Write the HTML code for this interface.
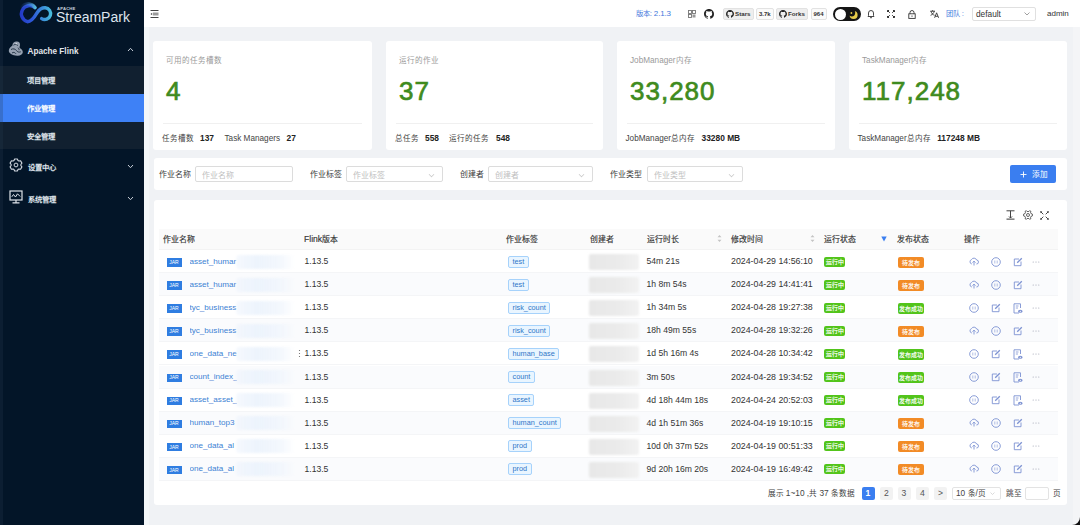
<!DOCTYPE html>
<html lang="zh-CN"><head><meta charset="utf-8">
<style>
*{box-sizing:border-box;margin:0;padding:0}
html,body{width:1080px;height:525px;overflow:hidden;background:#f0f2f5;font-family:"Liberation Sans",sans-serif;color:#333}
.abs{position:absolute}
.z{font-size:0.92em}
#side{position:absolute;left:0;top:0;width:144px;height:525px;background:#031528}
.mtxt{position:absolute;color:#dfe3ea;font-size:9px;line-height:10px;white-space:nowrap}
#hdr{position:absolute;left:144px;top:0;width:936px;height:27px;background:#fff}
.card{position:absolute;background:#fff;border-radius:3px}
.ct{position:absolute;font-size:8.2px;line-height:10px;color:#9a9a9a;white-space:nowrap}
.num{position:absolute;font-size:26px;line-height:26px;letter-spacing:1px;font-weight:normal;-webkit-text-stroke:0.7px #3f8b1e;color:#3f8b1e;white-space:nowrap}
.div{position:absolute;height:1px;background:#f0f0f0}
.ft{position:absolute;font-size:8.2px;line-height:10px;color:#444;white-space:nowrap}
.ft b{color:#222;font-size:8.4px;margin-left:6.5px;margin-right:10.5px}
.lbl{position:absolute;font-size:8.6px;line-height:10px;color:#3a3a3a;font-weight:normal;white-space:nowrap}
.inp{position:absolute;height:16px;border:1px solid #dcdcdc;border-radius:2px;background:#fff}
.ph{position:absolute;left:6px;top:3px;font-size:8.6px;line-height:10px;color:#c0c0c0;white-space:nowrap}
.chev{position:absolute;right:8px;top:5px;width:5px;height:5px;border-right:1px solid #c8c8c8;border-bottom:1px solid #c8c8c8;transform:rotate(45deg) scale(.8)}
.th{position:absolute;top:234px;font-size:8.6px;line-height:10px;font-weight:normal;-webkit-text-stroke:0.15px #333;color:#333;white-space:nowrap}
.row{position:absolute;left:159px;width:899px;height:23px}
.cell{position:absolute;font-size:8.6px;line-height:10px;color:#333;white-space:nowrap}
.jar{position:absolute;left:7.5px;top:8px;width:15px;height:8.5px;background:#2f7de1;color:#fff;font-size:5px;display:flex;align-items:center;justify-content:center;line-height:1}
.nm{position:absolute;left:30.5px;top:6.5px;font-size:8.1px;line-height:10px;color:#3d82d4;white-space:nowrap}
.blur{position:absolute;border-radius:3px;filter:blur(1px);background:linear-gradient(90deg,rgba(236,243,252,0.5),rgba(234,242,252,0.85) 35%,rgba(238,244,252,0.7) 75%,rgba(255,255,255,0))}
.tag{position:absolute;top:5.5px;height:12px;border:1px solid #a6d2fb;background:#e9f5ff;border-radius:2px;color:#2f76c8;font-size:7.3px;line-height:10px;padding:0 3.5px;white-space:nowrap}
.cr{position:absolute;left:430px;top:4px;width:50px;height:16px;border-radius:2px;filter:blur(1px);background:linear-gradient(90deg,#e8e8e8,#ebebeb 60%,#f2f2f2)}
.run{position:absolute;left:665px;top:6.5px;width:21px;height:10px;background:#52c41a;border-radius:2px;color:#fff;font-size:6.4px;line-height:10px;text-align:center;font-weight:normal;-webkit-text-stroke:0.15px #fff}
.pub{position:absolute;left:738.5px;top:6.5px;width:26px;height:11px;border-radius:2px;color:#fff;font-size:6.4px;line-height:11px;text-align:center;font-weight:normal;-webkit-text-stroke:0.15px #fff}
.ic{position:absolute;top:6.5px}
.pg{position:absolute;top:486.5px;width:13px;height:13px;border-radius:2px;font-size:8.6px;line-height:13px;text-align:center;color:#555}
</style></head><body>

<div id="side">
  <svg class="abs" style="left:12px;top:0px" width="48" height="28" viewBox="12 0 48 28">
    <defs>
      <linearGradient id="lg1" x1="17" y1="0" x2="52" y2="0" gradientUnits="userSpaceOnUse">
        <stop offset="0" stop-color="#2030c0"/><stop offset="0.45" stop-color="#2e5ad8"/><stop offset="1" stop-color="#48c0dc"/>
      </linearGradient>
      <linearGradient id="lg2" x1="20" y1="5" x2="36" y2="9" gradientUnits="userSpaceOnUse">
        <stop offset="0" stop-color="#2a4fd0" stop-opacity="0"/><stop offset="1" stop-color="#5cc6d8"/>
      </linearGradient>
    </defs>
    <path d="M35 7.6 A8.2 8.2 0 1 0 27.5 21.7 C31.5 21.7 34.2 17.5 37 12.8 C39.3 9 41.8 7.6 45.2 7.7 A5.9 5.9 0 1 1 41.6 18.6" fill="none" stroke="url(#lg1)" stroke-width="3.4" stroke-linecap="round"/>
    <path d="M22 6.7 A8.2 8.2 0 0 1 35 7.6" fill="none" stroke="url(#lg2)" stroke-width="3.2" stroke-linecap="round"/>
  </svg>
  <div class="abs" style="left:57px;top:5.5px;font-size:4.2px;line-height:5px;font-weight:bold;color:#c9d2de;letter-spacing:0.2px">APACHE</div>
  <div class="abs" style="left:56px;top:10px;font-size:14px;line-height:14px;color:#dde4ee;font-weight:normal">StreamPark</div>

  <!-- Apache Flink -->
  <svg class="abs" style="left:8px;top:41px" width="16" height="16" viewBox="0 0 16 16">
    <path d="M8.5 0.6 C11 0.4 12.3 2.2 12 4.3 C11.8 5.6 11.2 6.3 11.8 7 C13.8 8.2 15 9.8 14.8 11.6 C14.5 13.8 12.2 14.8 9.5 14.7 C6.5 14.6 3 14 1.5 11.8 C0.3 10 0.8 7.6 2.4 6.2 C3.6 5.1 4.6 5 4.5 3.8 C4.6 2 6.3 0.8 8.5 0.6 Z" fill="#96a1b1"/>
    <path d="M5.5 4.2 C6.8 3 9 3.3 9.8 4.6 M3 8.5 C5 7.2 7.5 8 8.5 9.6 C9.3 11 11 11.5 12.8 10.8 M4 12 C5.5 10.8 7 11.5 8 12.8 M9.8 6.8 C10.8 7.2 11.3 8.2 11 9.2" fill="none" stroke="#1a2a3c" stroke-width="0.9"/>
    <circle cx="8.2" cy="2.7" r="0.7" fill="#e6eaf0"/>
  </svg>
  <div class="mtxt" style="left:27.5px;top:46.5px;font-weight:bold;font-size:8.2px;color:#e2e6ec">Apache Flink</div>
  <svg class="abs" style="left:126.5px;top:47px" width="7" height="5" viewBox="0 0 7 5"><path d="M1 4 L3.5 1.3 L6 4" fill="none" stroke="#c8cfd8" stroke-width="1"/></svg>

  <div class="abs" style="left:0;top:65.5px;width:144px;height:83.5px;background:#112030"></div>
  <div class="abs" style="left:0;top:93.5px;width:144px;height:28px;background:#3e81f6"></div>
  <div class="mtxt" style="left:26.8px;top:75.5px;font-size:8px;font-weight:bold;color:#dfe4eb"><span class="z">项目管理</span></div>
  <div class="mtxt" style="left:26.8px;top:103.5px;font-size:8px;font-weight:bold;color:#fff"><span class="z">作业管理</span></div>
  <div class="mtxt" style="left:26.8px;top:131.5px;font-size:8px;font-weight:bold;color:#dfe4eb"><span class="z">安全管理</span></div>

  <!-- settings -->
  <svg class="abs" style="left:8.8px;top:157.8px" width="14" height="14" viewBox="0 0 14 14">
    <path d="M5.00 2.53 L5.65 0.95 L8.35 0.95 L9.00 2.53 L9.88 3.03 L11.56 2.80 L12.92 5.15 L11.87 6.49 L11.87 7.51 L12.92 8.85 L11.56 11.20 L9.88 10.97 L9.00 11.47 L8.35 13.05 L5.65 13.05 L5.00 11.47 L4.12 10.97 L2.44 11.20 L1.08 8.85 L2.13 7.51 L2.13 6.49 L1.08 5.15 L2.44 2.80 L4.12 3.03 Z" fill="none" stroke="#d2d8e0" stroke-width="1.1" stroke-linejoin="round"/>
    <circle cx="7" cy="7" r="1.9" fill="none" stroke="#d2d8e0" stroke-width="1"/>
  </svg>
  <div class="mtxt" style="left:27.5px;top:162.5px;font-size:8px;font-weight:bold;color:#dfe4eb"><span class="z">设置中心</span></div>
  <svg class="abs" style="left:126.5px;top:163.5px" width="7" height="5" viewBox="0 0 7 5"><path d="M1 1 L3.5 3.7 L6 1" fill="none" stroke="#c8cfd8" stroke-width="1"/></svg>

  <!-- system -->
  <svg class="abs" style="left:9px;top:189.5px" width="14" height="14" viewBox="0 0 14 14">
    <rect x="1" y="1" width="12" height="9" fill="none" stroke="#dfe4ea" stroke-width="1.2"/>
    <path d="M2.8 6.8 L4.5 4.5 L6.5 7 L8.5 3.8 L11.2 6.5" fill="none" stroke="#dfe4ea" stroke-width="1"/>
    <path d="M7 10 L7 12.5 M3.5 12.8 L10.5 12.8" fill="none" stroke="#dfe4ea" stroke-width="1.2"/>
  </svg>
  <div class="mtxt" style="left:27.5px;top:195px;font-size:8px;font-weight:bold;color:#dfe4eb"><span class="z">系统管理</span></div>
  <svg class="abs" style="left:126.5px;top:195.5px" width="7" height="5" viewBox="0 0 7 5"><path d="M1 1 L3.5 3.7 L6 1" fill="none" stroke="#c8cfd8" stroke-width="1"/></svg>
</div>
<div class="abs" style="left:144px;top:27px;width:5px;height:498px;background:#f4f7f9"></div>

<div id="hdr">
  <!-- collapse icon -->
  <svg class="abs" style="left:6px;top:9px" width="10" height="10" viewBox="0 0 10 10">
    <rect x="0.5" y="1" width="8" height="1" fill="#444"/>
    <rect x="0.5" y="8" width="8" height="1" fill="#444"/>
    <rect x="3" y="3.5" width="5.5" height="3" fill="#9a9a9a"/>
    <path d="M0.5 5 L2.2 3.8 L2.2 6.2 Z" fill="#444"/>
  </svg>
  <div class="abs" style="left:492px;top:8.5px;font-size:8px;line-height:10px;color:#3f78dc;white-space:nowrap;letter-spacing:-0.15px"><span class="z">版本</span>: 2.1.3</div>
  <!-- qr -->
  <svg class="abs" style="left:544px;top:10px" width="8" height="8" viewBox="0 0 8 8">
    <rect x="0.5" y="0.5" width="3" height="3" fill="none" stroke="#777" stroke-width="0.9"/>
    <rect x="4.5" y="0.5" width="3" height="3" fill="none" stroke="#777" stroke-width="0.9"/>
    <rect x="0.5" y="4.5" width="3" height="3" fill="none" stroke="#777" stroke-width="0.9"/>
    <rect x="4.5" y="4.5" width="3" height="3" fill="#999"/>
  </svg>
  <!-- github -->
  <svg class="abs" style="left:560px;top:9px" width="10" height="10" viewBox="0 0 16 16"><path fill="#222" d="M8 0C3.58 0 0 3.58 0 8c0 3.54 2.29 6.53 5.47 7.59.4.07.55-.17.55-.38 0-.19-.01-.82-.01-1.49-2.01.37-2.53-.49-2.69-.94-.09-.23-.48-.94-.82-1.13-.28-.15-.68-.52-.01-.53.63-.01 1.08.58 1.23.82.72 1.21 1.87.87 2.33.66.07-.52.28-.87.51-1.07-1.78-.2-3.640-.89-3.64-3.95 0-.87.31-1.59.82-2.15-.08-.2-.36-1.02.08-2.12 0 0 .67-.21 2.2.82.64-.18 1.32-.27 2-.27.68 0 1.36.09 2 .27 1.530-1.04 2.2-.82 2.2-.82.44 1.1.16 1.92.08 2.12.51.56.82 1.27.82 2.15 0 3.07-1.87 3.75-3.65 3.95.29.25.54.73.54 1.48 0 1.07-.01 1.93-.01 2.2 0 .21.15.46.55.38A8.013 8.013 0 0016 8c0-4.42-3.58-8-8-8z"/></svg>
  <!-- stars -->
  <div class="abs" style="left:579px;top:8px;width:30.5px;height:12px;background:#eeeeee;border:1px solid #e2e2e2;border-radius:2px"></div>
  <svg class="abs" style="left:582px;top:10px" width="8" height="8" viewBox="0 0 16 16"><path fill="#222" d="M8 0C3.58 0 0 3.58 0 8c0 3.54 2.29 6.53 5.470 7.59.4.07.55-.17.55-.38 0-.19-.01-.82-.01-1.49-2.010.37-2.53-.49-2.69-.94-.09-.23-.48-.94-.82-1.13-.28-.15-.68-.52-.01-.53.63-.01 1.08.58 1.23.82.72 1.21 1.87.87 2.33.66.07-.52.28-.87.51-1.07-1.78-.2-3.64-.89-3.64-3.95 0-.87.31-1.59.82-2.15-.08-.2-.36-1.02.08-2.12 0 0 .67-.21 2.2.82.64-.18 1.32-.27 2-.27.68 0 1.36.09 2 .27 1.53-1.04 2.2-.82 2.2-.82.44 1.1.16 1.92.08 2.12.51.56.82 1.27.82 2.15 0 3.07-1.87 3.75-3.65 3.95.29.25.54.73.54 1.48 0 1.07-.01 1.93-.01 2.2 0 .21.15.46.55.38A8.013 8.013 0 0016 8c0-4.42-3.58-8-8-8z"/></svg>
  <div class="abs" style="left:591px;top:9px;font-size:6.2px;line-height:9px;font-weight:bold;color:#333">Stars</div>
  <div class="abs" style="left:612px;top:8px;width:17.5px;height:12px;background:#fafafa;border:1px solid #e2e2e2;border-radius:2px;font-size:6px;line-height:10px;font-weight:bold;color:#333;text-align:center">3.7k</div>
  <div class="abs" style="left:632px;top:8px;width:31.5px;height:12px;background:#eeeeee;border:1px solid #e2e2e2;border-radius:2px"></div>
  <svg class="abs" style="left:635px;top:10px" width="8" height="8" viewBox="0 0 16 16"><path fill="#222" d="M8 0C3.58 0 0 3.58 0 8c0 3.54 2.29 6.53 5.47 7.59.4.07.55-.17.55-.38 0-.19-.01-.82-.01-1.49-2.01.37-2.53-.49-2.69-.94-.09-.23-.48-.94-.82-1.13-.28-.15-.68-.52-.01-.53.63-.01 1.08.58 1.23.82.72 1.21 1.87.87 2.33.66.07-.52.28-.87.51-1.07-1.78-.2-3.64-.89-3.64-3.95 0-.87.31-1.59.82-2.15-.08-.2-.36-1.02.08-2.12 0 0 .67-.21 2.2.82.64-.18 1.32-.27 2-.27.68 0 1.36.09 2 .27 1.53-1.04 2.2-.82 2.2-.82.44 1.1.16 1.92.08 2.12.51.56.82 1.27.82 2.15 0 3.07-1.87 3.75-3.65 3.95.29.25.54.73.54 1.48 0 1.07-.01 1.93-.01 2.2 0 .21.15.46.55.38A8.013 8.013 0 0016 8c0-4.42-3.58-8-8-8z"/></svg>
  <div class="abs" style="left:644px;top:9px;font-size:6.2px;line-height:9px;font-weight:bold;color:#333">Forks</div>
  <div class="abs" style="left:666.5px;top:8px;width:16px;height:12px;background:#fafafa;border:1px solid #e2e2e2;border-radius:2px;font-size:6px;line-height:10px;font-weight:bold;color:#333;text-align:center">964</div>
  <!-- dark toggle -->
  <div class="abs" style="left:689px;top:7px;width:27.5px;height:14px;background:#151515;border-radius:7px"></div>
  <div class="abs" style="left:690.5px;top:8.5px;width:11px;height:11px;background:#fff;border-radius:50%"></div>
  <svg class="abs" style="left:704px;top:8.5px" width="11" height="11" viewBox="0 0 11 11"><defs><mask id="mm"><rect width="11" height="11" fill="#fff"/><circle cx="3.6" cy="3.8" r="3.6" fill="#000"/></mask></defs><circle cx="5.6" cy="5.9" r="4" fill="#e8cc4a" mask="url(#mm)"/><circle cx="3.4" cy="4" r="0.9" fill="#e8cc4a"/></svg>
  <!-- bell -->
  <svg class="abs" style="left:723px;top:9px" width="8" height="10" viewBox="0 0 8 10"><path d="M1 7.5 L1.5 6.5 L1.5 4 A2.5 2.5 0 0 1 6.5 4 L6.5 6.5 L7 7.5 Z" fill="none" stroke="#333" stroke-width="0.9"/><path d="M3 8.7 L5 8.7" stroke="#333" stroke-width="0.9"/></svg>
  <!-- fullscreen -->
  <svg class="abs" style="left:743px;top:10px" width="8" height="8" viewBox="0 0 8 8"><path d="M0.5 0.5 L2.8 2.8 M0.5 0.5 L0.5 2 M0.5 0.5 L2 0.5 M7.5 0.5 L5.2 2.8 M7.5 0.5 L6 0.5 M7.5 0.5 L7.5 2 M0.5 7.5 L2.8 5.2 M0.5 7.5 L0.5 6 M0.5 7.5 L2 7.5 M7.5 7.5 L5.2 5.2 M7.5 7.5 L7.5 6 M7.5 7.5 L6 7.5" stroke="#333" stroke-width="1"/></svg>
  <!-- lock -->
  <svg class="abs" style="left:764px;top:9.5px" width="8" height="9" viewBox="0 0 8 9"><rect x="0.8" y="3.8" width="6.4" height="4.6" fill="none" stroke="#333" stroke-width="0.9"/><path d="M2 3.8 L2 2.5 A2 2 0 0 1 6 2.5 L6 3.8" fill="none" stroke="#333" stroke-width="0.9"/><path d="M4 5.5 L4 6.8" stroke="#333" stroke-width="0.9"/></svg>
  <!-- translate -->
  <svg class="abs" style="left:786px;top:10px" width="9" height="8" viewBox="0 0 9 8"><path d="M0.3 1.2 L5 1.2 M2.6 0.2 L2.6 1.2 M1 1.2 C1.5 3.5 3 4.8 4.6 5.3 M4.2 1.2 C3.8 3.2 2.5 4.6 0.6 5.3" fill="none" stroke="#333" stroke-width="0.9"/><path d="M4.6 7.8 L6.6 2.8 L8.6 7.8 M5.3 6.3 L7.9 6.3" fill="none" stroke="#333" stroke-width="0.9"/></svg>
  <div class="abs" style="left:801.5px;top:9px;font-size:7.8px;line-height:10px;color:#4a80e0;white-space:nowrap"><span class="z">团队</span> :</div>
  <div class="abs" style="left:827.5px;top:7px;width:64px;height:13.5px;border:1px solid #e0e0e0;border-radius:2px;background:#fff"></div>
  <div class="abs" style="left:832px;top:9px;font-size:8.3px;line-height:10px;color:#333">default</div>
  <svg class="abs" style="left:879.5px;top:12px" width="6" height="4" viewBox="0 0 6 4"><path d="M0.5 0.5 L3 3 L5.5 0.5" fill="none" stroke="#888" stroke-width="0.8"/></svg>
  <div class="abs" style="left:903px;top:8.5px;font-size:8px;line-height:10px;color:#333">admin</div>
</div>

<!-- stat cards -->
<div class="card" style="left:153px;top:41px;width:219px;height:109px">
  <div class="ct" style="left:13px;top:14.5px"><span class="z">可用的任务槽数</span></div>
  <div class="num" style="left:13px;top:37px">4</div>
  <div class="div" style="left:10px;top:82px;width:199px"></div>
  <div class="ft" style="left:8.5px;top:91.5px"><span class="z">任务槽数</span><b>137</b>Task Managers<b>27</b></div>
</div>
<div class="card" style="left:386px;top:41px;width:217px;height:109px">
  <div class="ct" style="left:13px;top:14.5px"><span class="z">运行的作业</span></div>
  <div class="num" style="left:13px;top:37px">37</div>
  <div class="div" style="left:10px;top:82px;width:197px"></div>
  <div class="ft" style="left:8.5px;top:91.5px"><span class="z">总任务</span><b>558</b><span class="z">运行的任务</span><b>548</b></div>
</div>
<div class="card" style="left:617px;top:41px;width:218px;height:109px">
  <div class="ct" style="left:13px;top:14.5px">JobManager<span class="z">内存</span></div>
  <div class="num" style="left:13px;top:37px">33,280</div>
  <div class="div" style="left:10px;top:82px;width:198px"></div>
  <div class="ft" style="left:8.5px;top:91.5px">JobManager<span class="z">总内存</span><b>33280 MB</b></div>
</div>
<div class="card" style="left:849px;top:41px;width:218px;height:109px">
  <div class="ct" style="left:13px;top:14.5px">TaskManager<span class="z">内存</span></div>
  <div class="num" style="left:13px;top:37px">117,248</div>
  <div class="div" style="left:10px;top:82px;width:198px"></div>
  <div class="ft" style="left:8.5px;top:91.5px">TaskManager<span class="z">总内存</span><b>117248 MB</b></div>
</div>

<!-- search -->
<div class="card" style="left:153.5px;top:158px;width:913px;height:32px">
  <div class="lbl" style="left:5.5px;top:11px"><span class="z">作业名称</span></div>
  <div class="inp" style="left:41.5px;top:8px;width:97.5px"><div class="ph"><span class="z">作业名称</span></div></div>
  <div class="lbl" style="left:156px;top:11px"><span class="z">作业标签</span></div>
  <div class="inp" style="left:192px;top:8px;width:97px"><div class="ph"><span class="z">作业标签</span></div><div class="chev"></div></div>
  <div class="lbl" style="left:306px;top:11px"><span class="z">创建者</span></div>
  <div class="inp" style="left:334.5px;top:8px;width:104.5px"><div class="ph"><span class="z">创建者</span></div><div class="chev"></div></div>
  <div class="lbl" style="left:456px;top:11px"><span class="z">作业类型</span></div>
  <div class="inp" style="left:493px;top:8px;width:96.5px"><div class="ph"><span class="z">作业类型</span></div><div class="chev"></div></div>
  <div class="abs" style="left:856.5px;top:7px;width:46px;height:17.5px;background:#3a7ef0;border-radius:2px"></div>
  <svg class="abs" style="left:866.5px;top:12.5px" width="7" height="7" viewBox="0 0 7 7"><path d="M3.5 0.5 L3.5 6.5 M0.5 3.5 L6.5 3.5" stroke="#fff" stroke-width="0.9"/></svg>
  <div class="abs" style="left:878.5px;top:10.5px;font-size:8.3px;line-height:10px;color:#fff;white-space:nowrap"><span class="z">添加</span></div>
</div>

<!-- table card -->
<div class="card" style="left:153.5px;top:200px;width:913px;height:305px"></div>
<!-- table -->
<div class="abs" style="left:159px;top:228.5px;width:899px;height:21.5px;background:#fafafa;border-bottom:1px solid #f3f3f3"></div>
<div class="th" style="left:163.3px"><span class="z">作业名称</span></div>
<div class="th" style="left:304px">Flink<span class="z">版本</span></div>
<div class="th" style="left:505.6px"><span class="z">作业标签</span></div>
<div class="th" style="left:589.7px"><span class="z">创建者</span></div>
<div class="th" style="left:646.5px"><span class="z">运行时长</span></div>
<div class="th" style="left:730.6px"><span class="z">修改时间</span></div>
<div class="th" style="left:823.8px"><span class="z">运行状态</span></div>
<div class="th" style="left:896.6px"><span class="z">发布状态</span></div>
<div class="th" style="left:964px"><span class="z">操作</span></div>
<svg class="abs" style="left:716.5px;top:234px" width="5" height="9" viewBox="0 0 5 9"><path d="M0.5 3.3 L2.5 1 L4.5 3.3 Z M0.5 5.7 L2.5 8 L4.5 5.7 Z" fill="#c4c4c4"/></svg>
<svg class="abs" style="left:809.5px;top:234px" width="5" height="9" viewBox="0 0 5 9"><path d="M0.5 3.3 L2.5 1 L4.5 3.3 Z M0.5 5.7 L2.5 8 L4.5 5.7 Z" fill="#c4c4c4"/></svg>
<svg class="abs" style="left:880.5px;top:235.5px" width="6" height="6" viewBox="0 0 6 6"><path d="M0.3 0.5 L5.7 0.5 L3 5.5 Z" fill="#3b7ff0"/></svg>
<div class="row" style="top:250.0px;background:#fff;border-bottom:1px solid #f4f5f7">
  <div class="jar">JAR</div>
  <div class="nm" style="width:47px;overflow:hidden">asset_humar</div>
  <div class="blur" style="left:77px;top:4.5px;width:59px;height:14px"></div>
  <div class="cell" style="left:145.5px;top:6px">1.13.5</div>
  <div class="tag" style="left:349px">test</div>
  <div class="cr"></div>
  <div class="cell" style="left:487.5px;top:6px">54m 21s</div>
  <div class="cell" style="left:572px;top:6px;font-size:8.8px">2024-04-29 14:56:10</div>
  <div class="run"><span class="z">运行中</span></div>
  <div class="pub" style="background:#f28b26"><span class="z">待发布</span></div>
  <div class="ic" style="left:809.5px;top:6.5px;line-height:0"><svg width="10" height="9" viewBox="0 0 10 9"><path d="M2.8 7 A2.3 2.3 0 0 1 2.5 2.6 A2.8 2.8 0 0 1 7.6 3 A2 2 0 0 1 7.4 7" fill="none" stroke="#7d92d2" stroke-width="0.9"/><path d="M5 8.5 L5 4.3 M3.5 5.6 L5 4.1 L6.5 5.6" fill="none" stroke="#7d92d2" stroke-width="0.9"/></svg></div>
  <div class="ic" style="left:831.5px;top:6.5px;line-height:0"><svg width="10" height="10" viewBox="0 0 10 10"><circle cx="5" cy="5" r="4.3" fill="none" stroke="#7d92d2" stroke-width="0.9"/><path d="M3.8 3.5 L3.8 6.5 M6.2 3.5 L6.2 6.5" stroke="#7d92d2" stroke-width="0.6"/></svg></div>
  <div class="ic" style="left:853.5px;top:6.5px;line-height:0"><svg width="10" height="10" viewBox="0 0 10 10"><path d="M6 2 L1.3 2 L1.3 8.7 L8 8.7 L8 4.5" fill="none" stroke="#7d92d2" stroke-width="0.9"/><path d="M4.2 5.8 L8.8 1.2" stroke="#7d92d2" stroke-width="1.3"/></svg></div>
  <div class="ic" style="left:873px;top:8.5px;line-height:0"><svg width="8" height="4" viewBox="0 0 8 4"><circle cx="1.2" cy="2" r="0.55" fill="#9ca1b0"/><circle cx="4" cy="2" r="0.55" fill="#9ca1b0"/><circle cx="6.8" cy="2" r="0.55" fill="#9ca1b0"/></svg></div>
</div>
<div class="row" style="top:273.1px;background:#fafbfd;border-bottom:1px solid #f4f5f7">
  <div class="jar">JAR</div>
  <div class="nm" style="width:47px;overflow:hidden">asset_humar</div>
  <div class="blur" style="left:77px;top:4.5px;width:59px;height:14px"></div>
  <div class="cell" style="left:145.5px;top:6px">1.13.5</div>
  <div class="tag" style="left:349px">test</div>
  <div class="cr"></div>
  <div class="cell" style="left:487.5px;top:6px">1h 8m 54s</div>
  <div class="cell" style="left:572px;top:6px;font-size:8.8px">2024-04-29 14:41:41</div>
  <div class="run"><span class="z">运行中</span></div>
  <div class="pub" style="background:#f28b26"><span class="z">待发布</span></div>
  <div class="ic" style="left:809.5px;top:6.5px;line-height:0"><svg width="10" height="9" viewBox="0 0 10 9"><path d="M2.8 7 A2.3 2.3 0 0 1 2.5 2.6 A2.8 2.8 0 0 1 7.6 3 A2 2 0 0 1 7.4 7" fill="none" stroke="#7d92d2" stroke-width="0.9"/><path d="M5 8.5 L5 4.3 M3.5 5.6 L5 4.1 L6.5 5.6" fill="none" stroke="#7d92d2" stroke-width="0.9"/></svg></div>
  <div class="ic" style="left:831.5px;top:6.5px;line-height:0"><svg width="10" height="10" viewBox="0 0 10 10"><circle cx="5" cy="5" r="4.3" fill="none" stroke="#7d92d2" stroke-width="0.9"/><path d="M3.8 3.5 L3.8 6.5 M6.2 3.5 L6.2 6.5" stroke="#7d92d2" stroke-width="0.6"/></svg></div>
  <div class="ic" style="left:853.5px;top:6.5px;line-height:0"><svg width="10" height="10" viewBox="0 0 10 10"><path d="M6 2 L1.3 2 L1.3 8.7 L8 8.7 L8 4.5" fill="none" stroke="#7d92d2" stroke-width="0.9"/><path d="M4.2 5.8 L8.8 1.2" stroke="#7d92d2" stroke-width="1.3"/></svg></div>
  <div class="ic" style="left:873px;top:8.5px;line-height:0"><svg width="8" height="4" viewBox="0 0 8 4"><circle cx="1.2" cy="2" r="0.55" fill="#9ca1b0"/><circle cx="4" cy="2" r="0.55" fill="#9ca1b0"/><circle cx="6.8" cy="2" r="0.55" fill="#9ca1b0"/></svg></div>
</div>
<div class="row" style="top:296.2px;background:#fff;border-bottom:1px solid #f4f5f7">
  <div class="jar">JAR</div>
  <div class="nm" style="width:47px;overflow:hidden">tyc_business</div>
  <div class="blur" style="left:77px;top:4.5px;width:59px;height:14px"></div>
  <div class="cell" style="left:145.5px;top:6px">1.13.5</div>
  <div class="tag" style="left:349px">risk_count</div>
  <div class="cr"></div>
  <div class="cell" style="left:487.5px;top:6px">1h 34m 5s</div>
  <div class="cell" style="left:572px;top:6px;font-size:8.8px">2024-04-28 19:27:38</div>
  <div class="run"><span class="z">运行中</span></div>
  <div class="pub" style="background:#52c41a"><span class="z">发布成功</span></div>
  <div class="ic" style="left:809.5px;top:6.5px;line-height:0"><svg width="10" height="10" viewBox="0 0 10 10"><circle cx="5" cy="5" r="4.3" fill="none" stroke="#7d92d2" stroke-width="0.9"/><path d="M3.8 3.5 L3.8 6.5 M6.2 3.5 L6.2 6.5" stroke="#7d92d2" stroke-width="0.6"/></svg></div>
  <div class="ic" style="left:831.5px;top:6.5px;line-height:0"><svg width="10" height="10" viewBox="0 0 10 10"><path d="M6 2 L1.3 2 L1.3 8.7 L8 8.7 L8 4.5" fill="none" stroke="#7d92d2" stroke-width="0.9"/><path d="M4.2 5.8 L8.8 1.2" stroke="#7d92d2" stroke-width="1.3"/></svg></div>
  <div class="ic" style="left:853.5px;top:6.5px;line-height:0"><svg width="10" height="11" viewBox="0 0 10 11"><path d="M6 10 L1 10 L1 0.8 L7.5 0.8 L7.5 5" fill="none" stroke="#7d92d2" stroke-width="0.9"/><path d="M2.8 3 L5.5 3 M2.8 5 L5 5" stroke="#7d92d2" stroke-width="0.8"/><ellipse cx="7.3" cy="8.3" rx="2.3" ry="1.5" fill="#7d92d2"/><circle cx="7.3" cy="8.3" r="0.6" fill="#fff"/></svg></div>
  <div class="ic" style="left:873px;top:8.5px;line-height:0"><svg width="8" height="4" viewBox="0 0 8 4"><circle cx="1.2" cy="2" r="0.55" fill="#9ca1b0"/><circle cx="4" cy="2" r="0.55" fill="#9ca1b0"/><circle cx="6.8" cy="2" r="0.55" fill="#9ca1b0"/></svg></div>
</div>
<div class="row" style="top:319.3px;background:#fafbfd;border-bottom:1px solid #f4f5f7">
  <div class="jar">JAR</div>
  <div class="nm" style="width:47px;overflow:hidden">tyc_business</div>
  <div class="blur" style="left:77px;top:4.5px;width:59px;height:14px"></div>
  <div class="cell" style="left:145.5px;top:6px">1.13.5</div>
  <div class="tag" style="left:349px">risk_count</div>
  <div class="cr"></div>
  <div class="cell" style="left:487.5px;top:6px">18h 49m 55s</div>
  <div class="cell" style="left:572px;top:6px;font-size:8.8px">2024-04-28 19:32:26</div>
  <div class="run"><span class="z">运行中</span></div>
  <div class="pub" style="background:#f28b26"><span class="z">待发布</span></div>
  <div class="ic" style="left:809.5px;top:6.5px;line-height:0"><svg width="10" height="9" viewBox="0 0 10 9"><path d="M2.8 7 A2.3 2.3 0 0 1 2.5 2.6 A2.8 2.8 0 0 1 7.6 3 A2 2 0 0 1 7.4 7" fill="none" stroke="#7d92d2" stroke-width="0.9"/><path d="M5 8.5 L5 4.3 M3.5 5.6 L5 4.1 L6.5 5.6" fill="none" stroke="#7d92d2" stroke-width="0.9"/></svg></div>
  <div class="ic" style="left:831.5px;top:6.5px;line-height:0"><svg width="10" height="10" viewBox="0 0 10 10"><circle cx="5" cy="5" r="4.3" fill="none" stroke="#7d92d2" stroke-width="0.9"/><path d="M3.8 3.5 L3.8 6.5 M6.2 3.5 L6.2 6.5" stroke="#7d92d2" stroke-width="0.6"/></svg></div>
  <div class="ic" style="left:853.5px;top:6.5px;line-height:0"><svg width="10" height="10" viewBox="0 0 10 10"><path d="M6 2 L1.3 2 L1.3 8.7 L8 8.7 L8 4.5" fill="none" stroke="#7d92d2" stroke-width="0.9"/><path d="M4.2 5.8 L8.8 1.2" stroke="#7d92d2" stroke-width="1.3"/></svg></div>
  <div class="ic" style="left:873px;top:8.5px;line-height:0"><svg width="8" height="4" viewBox="0 0 8 4"><circle cx="1.2" cy="2" r="0.55" fill="#9ca1b0"/><circle cx="4" cy="2" r="0.55" fill="#9ca1b0"/><circle cx="6.8" cy="2" r="0.55" fill="#9ca1b0"/></svg></div>
</div>
<div class="row" style="top:342.4px;background:#fff;border-bottom:1px solid #f4f5f7">
  <div class="jar">JAR</div>
  <div class="nm" style="width:47px;overflow:hidden">one_data_ne</div>
  <div class="blur" style="left:77px;top:4.5px;width:59px;height:14px"></div>
  <div class="cell" style="left:145.5px;top:6px">1.13.5</div>
  <div class="tag" style="left:349px">human_base</div>
  <div class="cr"></div>
  <div class="cell" style="left:487.5px;top:6px">1d 5h 16m 4s</div>
  <div class="cell" style="left:572px;top:6px;font-size:8.8px">2024-04-28 10:34:42</div>
  <div class="run"><span class="z">运行中</span></div>
  <div class="pub" style="background:#52c41a"><span class="z">发布成功</span></div>
  <div class="ic" style="left:809.5px;top:6.5px;line-height:0"><svg width="10" height="10" viewBox="0 0 10 10"><circle cx="5" cy="5" r="4.3" fill="none" stroke="#7d92d2" stroke-width="0.9"/><path d="M3.8 3.5 L3.8 6.5 M6.2 3.5 L6.2 6.5" stroke="#7d92d2" stroke-width="0.6"/></svg></div>
  <div class="ic" style="left:831.5px;top:6.5px;line-height:0"><svg width="10" height="10" viewBox="0 0 10 10"><path d="M6 2 L1.3 2 L1.3 8.7 L8 8.7 L8 4.5" fill="none" stroke="#7d92d2" stroke-width="0.9"/><path d="M4.2 5.8 L8.8 1.2" stroke="#7d92d2" stroke-width="1.3"/></svg></div>
  <div class="ic" style="left:853.5px;top:6.5px;line-height:0"><svg width="10" height="11" viewBox="0 0 10 11"><path d="M6 10 L1 10 L1 0.8 L7.5 0.8 L7.5 5" fill="none" stroke="#7d92d2" stroke-width="0.9"/><path d="M2.8 3 L5.5 3 M2.8 5 L5 5" stroke="#7d92d2" stroke-width="0.8"/><ellipse cx="7.3" cy="8.3" rx="2.3" ry="1.5" fill="#7d92d2"/><circle cx="7.3" cy="8.3" r="0.6" fill="#fff"/></svg></div>
  <div class="ic" style="left:873px;top:8.5px;line-height:0"><svg width="8" height="4" viewBox="0 0 8 4"><circle cx="1.2" cy="2" r="0.55" fill="#9ca1b0"/><circle cx="4" cy="2" r="0.55" fill="#9ca1b0"/><circle cx="6.8" cy="2" r="0.55" fill="#9ca1b0"/></svg></div>
</div>
<div class="row" style="top:365.5px;background:#fafbfd;border-bottom:1px solid #f4f5f7">
  <div class="jar">JAR</div>
  <div class="nm" style="width:47px;overflow:hidden">count_index_</div>
  <div class="blur" style="left:77px;top:4.5px;width:59px;height:14px"></div>
  <div class="cell" style="left:145.5px;top:6px">1.13.5</div>
  <div class="tag" style="left:349px">count</div>
  <div class="cr"></div>
  <div class="cell" style="left:487.5px;top:6px">3m 50s</div>
  <div class="cell" style="left:572px;top:6px;font-size:8.8px">2024-04-28 19:34:52</div>
  <div class="run"><span class="z">运行中</span></div>
  <div class="pub" style="background:#52c41a"><span class="z">发布成功</span></div>
  <div class="ic" style="left:809.5px;top:6.5px;line-height:0"><svg width="10" height="10" viewBox="0 0 10 10"><circle cx="5" cy="5" r="4.3" fill="none" stroke="#7d92d2" stroke-width="0.9"/><path d="M3.8 3.5 L3.8 6.5 M6.2 3.5 L6.2 6.5" stroke="#7d92d2" stroke-width="0.6"/></svg></div>
  <div class="ic" style="left:831.5px;top:6.5px;line-height:0"><svg width="10" height="10" viewBox="0 0 10 10"><path d="M6 2 L1.3 2 L1.3 8.7 L8 8.7 L8 4.5" fill="none" stroke="#7d92d2" stroke-width="0.9"/><path d="M4.2 5.8 L8.8 1.2" stroke="#7d92d2" stroke-width="1.3"/></svg></div>
  <div class="ic" style="left:853.5px;top:6.5px;line-height:0"><svg width="10" height="11" viewBox="0 0 10 11"><path d="M6 10 L1 10 L1 0.8 L7.5 0.8 L7.5 5" fill="none" stroke="#7d92d2" stroke-width="0.9"/><path d="M2.8 3 L5.5 3 M2.8 5 L5 5" stroke="#7d92d2" stroke-width="0.8"/><ellipse cx="7.3" cy="8.3" rx="2.3" ry="1.5" fill="#7d92d2"/><circle cx="7.3" cy="8.3" r="0.6" fill="#fff"/></svg></div>
  <div class="ic" style="left:873px;top:8.5px;line-height:0"><svg width="8" height="4" viewBox="0 0 8 4"><circle cx="1.2" cy="2" r="0.55" fill="#9ca1b0"/><circle cx="4" cy="2" r="0.55" fill="#9ca1b0"/><circle cx="6.8" cy="2" r="0.55" fill="#9ca1b0"/></svg></div>
</div>
<div class="row" style="top:388.6px;background:#fff;border-bottom:1px solid #f4f5f7">
  <div class="jar">JAR</div>
  <div class="nm" style="width:47px;overflow:hidden">asset_asset_</div>
  <div class="blur" style="left:77px;top:4.5px;width:59px;height:14px"></div>
  <div class="cell" style="left:145.5px;top:6px">1.13.5</div>
  <div class="tag" style="left:349px">asset</div>
  <div class="cr"></div>
  <div class="cell" style="left:487.5px;top:6px">4d 18h 44m 18s</div>
  <div class="cell" style="left:572px;top:6px;font-size:8.8px">2024-04-24 20:52:03</div>
  <div class="run"><span class="z">运行中</span></div>
  <div class="pub" style="background:#52c41a"><span class="z">发布成功</span></div>
  <div class="ic" style="left:809.5px;top:6.5px;line-height:0"><svg width="10" height="10" viewBox="0 0 10 10"><circle cx="5" cy="5" r="4.3" fill="none" stroke="#7d92d2" stroke-width="0.9"/><path d="M3.8 3.5 L3.8 6.5 M6.2 3.5 L6.2 6.5" stroke="#7d92d2" stroke-width="0.6"/></svg></div>
  <div class="ic" style="left:831.5px;top:6.5px;line-height:0"><svg width="10" height="10" viewBox="0 0 10 10"><path d="M6 2 L1.3 2 L1.3 8.7 L8 8.7 L8 4.5" fill="none" stroke="#7d92d2" stroke-width="0.9"/><path d="M4.2 5.8 L8.8 1.2" stroke="#7d92d2" stroke-width="1.3"/></svg></div>
  <div class="ic" style="left:853.5px;top:6.5px;line-height:0"><svg width="10" height="11" viewBox="0 0 10 11"><path d="M6 10 L1 10 L1 0.8 L7.5 0.8 L7.5 5" fill="none" stroke="#7d92d2" stroke-width="0.9"/><path d="M2.8 3 L5.5 3 M2.8 5 L5 5" stroke="#7d92d2" stroke-width="0.8"/><ellipse cx="7.3" cy="8.3" rx="2.3" ry="1.5" fill="#7d92d2"/><circle cx="7.3" cy="8.3" r="0.6" fill="#fff"/></svg></div>
  <div class="ic" style="left:873px;top:8.5px;line-height:0"><svg width="8" height="4" viewBox="0 0 8 4"><circle cx="1.2" cy="2" r="0.55" fill="#9ca1b0"/><circle cx="4" cy="2" r="0.55" fill="#9ca1b0"/><circle cx="6.8" cy="2" r="0.55" fill="#9ca1b0"/></svg></div>
</div>
<div class="row" style="top:411.7px;background:#fafbfd;border-bottom:1px solid #f4f5f7">
  <div class="jar">JAR</div>
  <div class="nm" style="width:47px;overflow:hidden">human_top3</div>
  <div class="blur" style="left:77px;top:4.5px;width:59px;height:14px"></div>
  <div class="cell" style="left:145.5px;top:6px">1.13.5</div>
  <div class="tag" style="left:349px">human_count</div>
  <div class="cr"></div>
  <div class="cell" style="left:487.5px;top:6px">4d 1h 51m 36s</div>
  <div class="cell" style="left:572px;top:6px;font-size:8.8px">2024-04-19 19:10:15</div>
  <div class="run"><span class="z">运行中</span></div>
  <div class="pub" style="background:#f28b26"><span class="z">待发布</span></div>
  <div class="ic" style="left:809.5px;top:6.5px;line-height:0"><svg width="10" height="9" viewBox="0 0 10 9"><path d="M2.8 7 A2.3 2.3 0 0 1 2.5 2.6 A2.8 2.8 0 0 1 7.6 3 A2 2 0 0 1 7.4 7" fill="none" stroke="#7d92d2" stroke-width="0.9"/><path d="M5 8.5 L5 4.3 M3.5 5.6 L5 4.1 L6.5 5.6" fill="none" stroke="#7d92d2" stroke-width="0.9"/></svg></div>
  <div class="ic" style="left:831.5px;top:6.5px;line-height:0"><svg width="10" height="10" viewBox="0 0 10 10"><circle cx="5" cy="5" r="4.3" fill="none" stroke="#7d92d2" stroke-width="0.9"/><path d="M3.8 3.5 L3.8 6.5 M6.2 3.5 L6.2 6.5" stroke="#7d92d2" stroke-width="0.6"/></svg></div>
  <div class="ic" style="left:853.5px;top:6.5px;line-height:0"><svg width="10" height="10" viewBox="0 0 10 10"><path d="M6 2 L1.3 2 L1.3 8.7 L8 8.7 L8 4.5" fill="none" stroke="#7d92d2" stroke-width="0.9"/><path d="M4.2 5.8 L8.8 1.2" stroke="#7d92d2" stroke-width="1.3"/></svg></div>
  <div class="ic" style="left:873px;top:8.5px;line-height:0"><svg width="8" height="4" viewBox="0 0 8 4"><circle cx="1.2" cy="2" r="0.55" fill="#9ca1b0"/><circle cx="4" cy="2" r="0.55" fill="#9ca1b0"/><circle cx="6.8" cy="2" r="0.55" fill="#9ca1b0"/></svg></div>
</div>
<div class="row" style="top:434.8px;background:#fff;border-bottom:1px solid #f4f5f7">
  <div class="jar">JAR</div>
  <div class="nm" style="width:47px;overflow:hidden">one_data_al</div>
  <div class="blur" style="left:77px;top:4.5px;width:59px;height:14px"></div>
  <div class="cell" style="left:145.5px;top:6px">1.13.5</div>
  <div class="tag" style="left:349px">prod</div>
  <div class="cr"></div>
  <div class="cell" style="left:487.5px;top:6px">10d 0h 37m 52s</div>
  <div class="cell" style="left:572px;top:6px;font-size:8.8px">2024-04-19 00:51:33</div>
  <div class="run"><span class="z">运行中</span></div>
  <div class="pub" style="background:#f28b26"><span class="z">待发布</span></div>
  <div class="ic" style="left:809.5px;top:6.5px;line-height:0"><svg width="10" height="9" viewBox="0 0 10 9"><path d="M2.8 7 A2.3 2.3 0 0 1 2.5 2.6 A2.8 2.8 0 0 1 7.6 3 A2 2 0 0 1 7.4 7" fill="none" stroke="#7d92d2" stroke-width="0.9"/><path d="M5 8.5 L5 4.3 M3.5 5.6 L5 4.1 L6.5 5.6" fill="none" stroke="#7d92d2" stroke-width="0.9"/></svg></div>
  <div class="ic" style="left:831.5px;top:6.5px;line-height:0"><svg width="10" height="10" viewBox="0 0 10 10"><circle cx="5" cy="5" r="4.3" fill="none" stroke="#7d92d2" stroke-width="0.9"/><path d="M3.8 3.5 L3.8 6.5 M6.2 3.5 L6.2 6.5" stroke="#7d92d2" stroke-width="0.6"/></svg></div>
  <div class="ic" style="left:853.5px;top:6.5px;line-height:0"><svg width="10" height="10" viewBox="0 0 10 10"><path d="M6 2 L1.3 2 L1.3 8.7 L8 8.7 L8 4.5" fill="none" stroke="#7d92d2" stroke-width="0.9"/><path d="M4.2 5.8 L8.8 1.2" stroke="#7d92d2" stroke-width="1.3"/></svg></div>
  <div class="ic" style="left:873px;top:8.5px;line-height:0"><svg width="8" height="4" viewBox="0 0 8 4"><circle cx="1.2" cy="2" r="0.55" fill="#9ca1b0"/><circle cx="4" cy="2" r="0.55" fill="#9ca1b0"/><circle cx="6.8" cy="2" r="0.55" fill="#9ca1b0"/></svg></div>
</div>
<div class="row" style="top:457.9px;background:#fafbfd;border-bottom:1px solid #f4f5f7">
  <div class="jar">JAR</div>
  <div class="nm" style="width:47px;overflow:hidden">one_data_al</div>
  <div class="blur" style="left:77px;top:4.5px;width:59px;height:14px"></div>
  <div class="cell" style="left:145.5px;top:6px">1.13.5</div>
  <div class="tag" style="left:349px">prod</div>
  <div class="cr"></div>
  <div class="cell" style="left:487.5px;top:6px">9d 20h 16m 20s</div>
  <div class="cell" style="left:572px;top:6px;font-size:8.8px">2024-04-19 16:49:42</div>
  <div class="run"><span class="z">运行中</span></div>
  <div class="pub" style="background:#f28b26"><span class="z">待发布</span></div>
  <div class="ic" style="left:809.5px;top:6.5px;line-height:0"><svg width="10" height="9" viewBox="0 0 10 9"><path d="M2.8 7 A2.3 2.3 0 0 1 2.5 2.6 A2.8 2.8 0 0 1 7.6 3 A2 2 0 0 1 7.4 7" fill="none" stroke="#7d92d2" stroke-width="0.9"/><path d="M5 8.5 L5 4.3 M3.5 5.6 L5 4.1 L6.5 5.6" fill="none" stroke="#7d92d2" stroke-width="0.9"/></svg></div>
  <div class="ic" style="left:831.5px;top:6.5px;line-height:0"><svg width="10" height="10" viewBox="0 0 10 10"><circle cx="5" cy="5" r="4.3" fill="none" stroke="#7d92d2" stroke-width="0.9"/><path d="M3.8 3.5 L3.8 6.5 M6.2 3.5 L6.2 6.5" stroke="#7d92d2" stroke-width="0.6"/></svg></div>
  <div class="ic" style="left:853.5px;top:6.5px;line-height:0"><svg width="10" height="10" viewBox="0 0 10 10"><path d="M6 2 L1.3 2 L1.3 8.7 L8 8.7 L8 4.5" fill="none" stroke="#7d92d2" stroke-width="0.9"/><path d="M4.2 5.8 L8.8 1.2" stroke="#7d92d2" stroke-width="1.3"/></svg></div>
  <div class="ic" style="left:873px;top:8.5px;line-height:0"><svg width="8" height="4" viewBox="0 0 8 4"><circle cx="1.2" cy="2" r="0.55" fill="#9ca1b0"/><circle cx="4" cy="2" r="0.55" fill="#9ca1b0"/><circle cx="6.8" cy="2" r="0.55" fill="#9ca1b0"/></svg></div>
</div>
<svg class="abs" style="left:1006px;top:210px" width="9" height="10" viewBox="0 0 9 10"><path d="M0.5 0.8 L8.5 0.8 M4.5 0.8 L4.5 8 M3 6.5 L4.5 8 L6 6.5" fill="none" stroke="#444" stroke-width="1"/><rect x="0.5" y="8.5" width="8" height="1.3" fill="#666"/></svg>
<svg class="abs" style="left:1023px;top:210px" width="10" height="10" viewBox="0 0 10 10"><path d="M8.46 4.01 L9.54 4.27 L9.54 5.73 L8.46 5.99 L7.59 7.50 L7.91 8.57 L6.64 9.30 L5.87 8.49 L4.13 8.49 L3.36 9.30 L2.09 8.57 L2.41 7.50 L1.54 5.99 L0.46 5.73 L0.46 4.27 L1.54 4.01 L2.41 2.50 L2.09 1.43 L3.36 0.70 L4.13 1.51 L5.87 1.51 L6.64 0.70 L7.91 1.43 L7.59 2.50 Z" fill="none" stroke="#555" stroke-width="1" stroke-linejoin="round"/><circle cx="5" cy="5" r="1.5" fill="none" stroke="#555" stroke-width="0.9"/></svg>
<svg class="abs" style="left:1040px;top:210.5px" width="9" height="9" viewBox="0 0 9 9"><path d="M0.7 0.7 L3.3 3.3 M8.3 0.7 L5.7 3.3 M0.7 8.3 L3.3 5.7 M8.3 8.3 L5.7 5.7" stroke="#444" stroke-width="1"/><path d="M0.3 0.3 L2.3 0.3 L0.3 2.3 Z M8.7 0.3 L6.7 0.3 L8.7 2.3 Z M0.3 8.7 L0.3 6.7 L2.3 8.7 Z M8.7 8.7 L8.7 6.7 L6.7 8.7 Z" fill="#444"/></svg>
<div class="abs" style="left:767.5px;top:488px;font-size:8.3px;line-height:10px;color:#444;white-space:nowrap"><span class="z">展示</span> 1~10 ,<span class="z">共</span> 37 <span class="z">条数据</span></div>
<div class="pg" style="left:861.5px;background:#3a7ef0;color:#fff;font-weight:bold">1</div>
<div class="pg" style="left:880px;background:#f2f2f2">2</div>
<div class="pg" style="left:897.5px;background:#f2f2f2">3</div>
<div class="pg" style="left:916px;background:#f2f2f2">4</div>
<div class="pg" style="left:934px;background:#f2f2f2">&gt;</div>
<div class="abs" style="left:951.5px;top:486.5px;width:49.5px;height:13px;border:1px solid #e3e3e3;border-radius:2px;background:#fff"></div>
<div class="abs" style="left:956px;top:488px;font-size:8.3px;line-height:10px;color:#444;white-space:nowrap">10 <span class="z">条</span>/<span class="z">页</span></div>
<svg class="abs" style="left:990px;top:492px" width="5" height="3" viewBox="0 0 5 3"><path d="M0.5 0.5 L2.5 2.5 L4.5 0.5" fill="none" stroke="#ccc" stroke-width="0.7"/></svg>
<div class="abs" style="left:1006px;top:488px;font-size:8.3px;line-height:10px;color:#444;white-space:nowrap"><span class="z">跳至</span></div>
<div class="abs" style="left:1025px;top:486.5px;width:24px;height:13px;border:1px solid #e3e3e3;border-radius:2px;background:#fff"></div>
<div class="abs" style="left:1053px;top:488px;font-size:8.3px;line-height:10px;color:#444;white-space:nowrap"><span class="z">页</span></div>
<!-- /table -->
<svg class="abs" style="left:298px;top:349px" width="3" height="9" viewBox="0 0 3 9"><circle cx="1.5" cy="1.5" r="0.6" fill="#666"/><circle cx="1.5" cy="4.5" r="0.6" fill="#666"/><circle cx="1.5" cy="7.5" r="0.6" fill="#666"/></svg>
<div class="abs" style="left:1073px;top:27px;width:7px;height:498px;background:#f4f5f7"></div>
<div class="abs" style="left:0;top:0;width:3px;height:525px;background:rgba(40,60,80,0.25)"></div>
<svg class="abs" style="left:1072px;top:517px" width="8" height="8" viewBox="0 0 8 8"><path d="M8 0 L8 8 L0 8 A8 8 0 0 0 8 0 Z" fill="#111"/></svg>
</body></html>
